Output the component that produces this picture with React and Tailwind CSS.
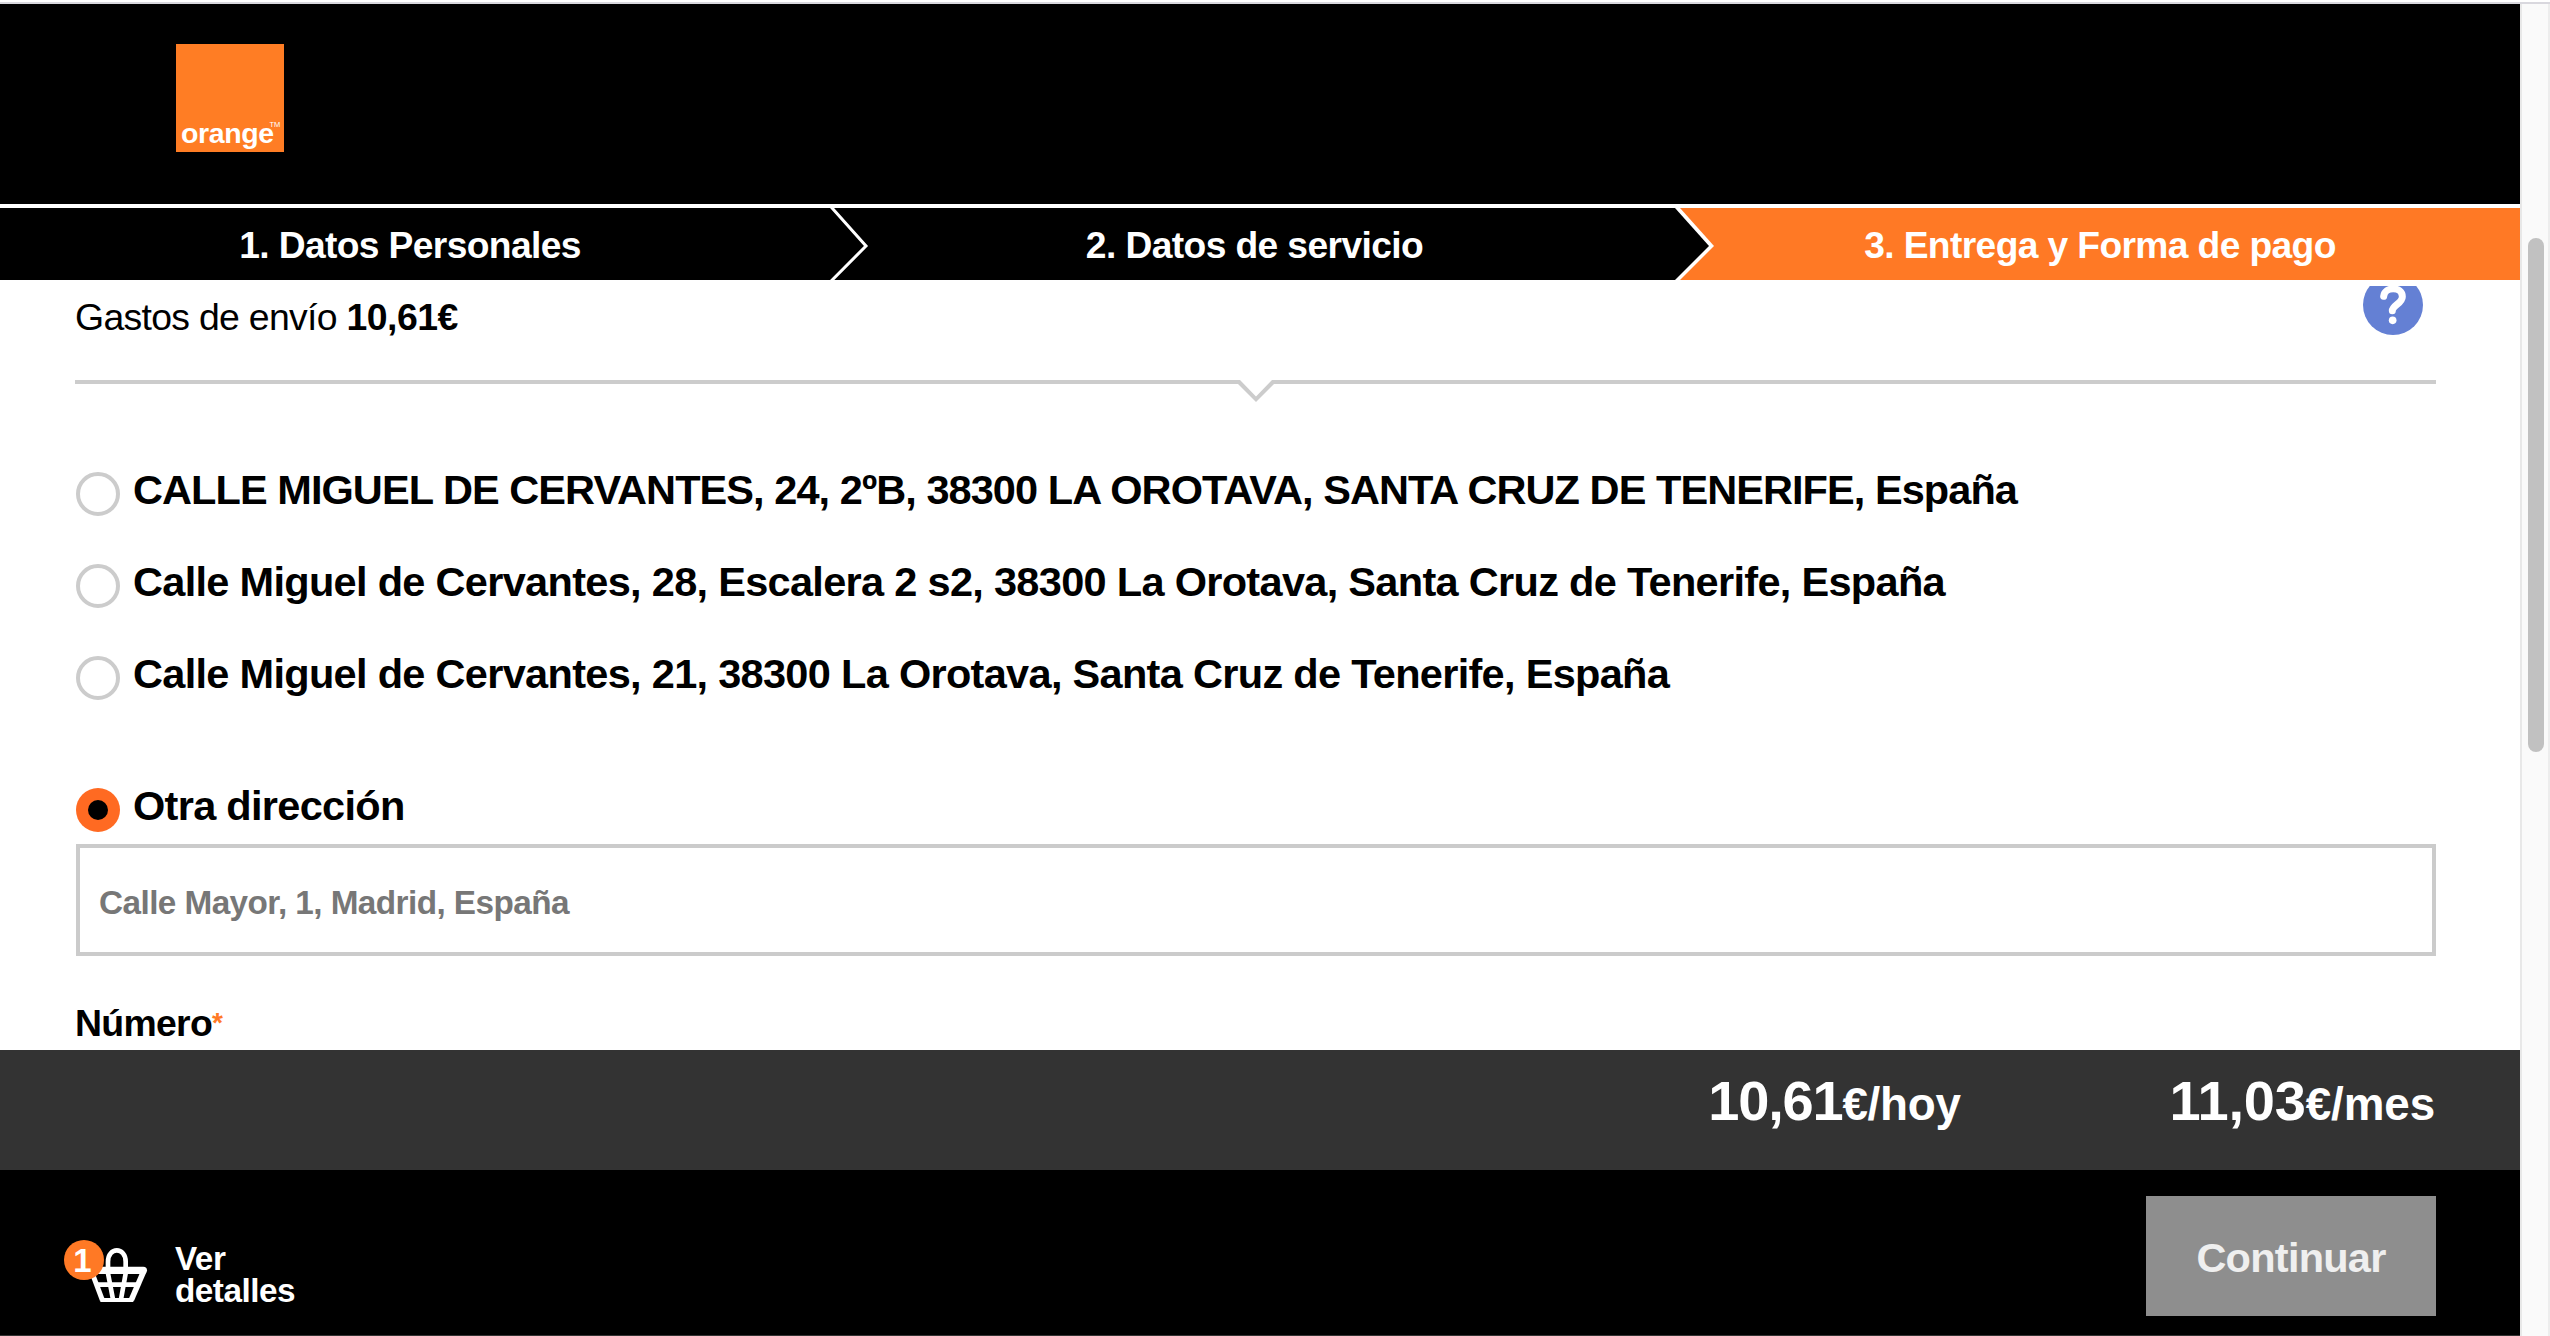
const addresses = [
  {
    text: "CALLE MIGUEL DE CERVANTES, 24, 2ºB, 38300 LA OROTAVA, SANTA CRUZ DE TENERIFE, España",
    tracking: "tracking-[-0.93px]",
  },
  {
    text: "Calle Miguel de Cervantes, 28, Escalera 2 s2, 38300 La Orotava, Santa Cruz de Tenerife, España",
    tracking: "tracking-[-0.69px]",
  },
  {
    text: "Calle Miguel de Cervantes, 21, 38300 La Orotava, Santa Cruz de Tenerife, España",
    tracking: "tracking-[-0.69px]",
  },
];

function Header() {
  return (
    <header className="flex h-[200px] shrink-0 bg-black pl-[176px] pt-10">
      <div className="relative flex size-[108px] items-end bg-[#ff7d24] pl-[5px] text-white">
        <span className="text-[28.5px] font-bold leading-[38px] tracking-[-0.4px]">orange</span>
        <span className="absolute left-[93.5px] top-[76px] text-[7.5px] leading-[9px]">TM</span>
      </div>
    </header>
  );
}

function Steps() {
  return (
    <nav className="mt-1 flex h-[72px] shrink-0 text-[37.2px] font-bold leading-[75px] text-white">
      <div className="relative flex w-[840px] justify-center bg-black pr-5 tracking-[-0.62px]">
        1. Datos Personales
        <svg className="absolute left-[820px] top-0 z-10" width="56" height="72" viewBox="0 0 56 72" fill="none">
          <path d="M11 -1.2 L46 38 L11 73.2" stroke="#fff" strokeWidth="3" />
        </svg>
      </div>
      <div className="flex w-[840px] justify-center bg-black pr-[11px] tracking-[-0.6px]">2. Datos de servicio</div>
      <div className="relative flex w-[840px] justify-center bg-[#ff7925] tracking-[-0.62px]">
        <svg className="absolute left-[-10px] top-0" width="50" height="72" viewBox="0 0 50 72">
          <path d="M0 0 H10 L44 38 L10 72 H0 Z" fill="#fff" />
          <path d="M0 0 H5 L39 38 L5 72 H0 Z" fill="#000" />
        </svg>
        3. Entrega y Forma de pago
      </div>
    </nav>
  );
}

function HelpIcon() {
  return (
    <svg className="mr-[13px] mt-[-11px] shrink-0" width="60" height="60" viewBox="99 15 180 180" fill="none">
      <circle cx="189" cy="105" r="90" fill="#6480d4" />
      <path
        d="M161 79 C164 49 217 49 217 80 C217 100 187 106 187 122"
        stroke="#fff"
        strokeWidth="21"
        strokeLinecap="round"
      />
      <circle cx="188" cy="151" r="11.5" fill="#fff" />
    </svg>
  );
}

function Divider() {
  return (
    <div className="flex h-[22px]">
      <div className="h-1 flex-1 bg-[#ccc]" />
      <svg width="40" height="22" viewBox="0 0 40 22">
        <path d="M0 0 H4 L20 16.5 L36 0 H40 V4 H38 L20 22 L2 4 H0 Z" fill="#ccc" />
      </svg>
      <div className="h-1 flex-1 bg-[#ccc]" />
    </div>
  );
}

function Radio({ checked }) {
  return checked ? (
    <span className="flex size-11 shrink-0 items-center justify-center rounded-full bg-[#ff6a22]">
      <span className="size-5 rounded-full bg-black" />
    </span>
  ) : (
    <span className="size-11 shrink-0 rounded-full border-4 border-[#ccc] bg-white" />
  );
}

function Content() {
  return (
    <main className="mt-[6px] h-[764px] shrink-0 overflow-hidden pl-[75px] pr-[84px] text-black">
      <div className="flex h-[94px] justify-between">
        <p className="whitespace-pre text-[37.4px] leading-[63px]">
          <span className="tracking-[-0.7px]">Gastos de envío </span>
          <b className="tracking-[-0.5px]">10,61€</b>
        </p>
        <HelpIcon />
      </div>
      <Divider />
      <div className="ml-px mt-[46px]">
        {addresses.map((a) => (
          <label key={a.text} className="flex h-[92px] items-center gap-[13px]">
            <Radio />
            <span className={`whitespace-nowrap pb-2 text-[41.5px] font-bold leading-[48px] ${a.tracking}`}>
              {a.text}
            </span>
          </label>
        ))}
        <label className="mt-16 flex h-11 items-center gap-[13px]">
          <Radio checked />
          <span className="pb-2 text-[41.5px] font-bold leading-[48px] tracking-[-0.7px]">Otra dirección</span>
        </label>
        <div className="mt-3 flex h-28 items-center border-4 border-[#cbcbcb] pl-[19px] pt-[5px] text-[33.3px] font-bold leading-10 tracking-[-0.56px] text-[#777]">
          Calle Mayor, 1, Madrid, España
        </div>
      </div>
      <div className="mt-[47px] flex h-10 text-[37.4px] font-bold leading-10 tracking-[-0.7px]">
        Número
        <span className="text-[28px] leading-[39px] text-[#ff7925]">*</span>
      </div>
    </main>
  );
}

function BasketIcon() {
  return (
    <div className="relative h-16 w-[84px]">
      <svg className="absolute left-6 top-[6px]" width="60" height="58" viewBox="96 48 180 174" fill="none" stroke="#fff">
        <path d="M112 121 H262" strokeWidth="22" strokeLinecap="round" />
        <path d="M108 128 L139 210" strokeWidth="15" />
        <path d="M263 124 L226 210" strokeWidth="17" />
        <path d="M133 210 H232" strokeWidth="12" />
        <path d="M118 164 H246" strokeWidth="14" />
        <path d="M171 208 L156 130 V95 C156 50 209 50 209 95 V130 L195 208" strokeWidth="14" />
      </svg>
      <span className="absolute left-0 top-0 flex size-10 justify-center rounded-full bg-[#ff7925] pr-[3px] text-[33px] font-bold leading-[42px] text-white">
        1
      </span>
    </div>
  );
}

function Footer() {
  return (
    <footer className="flex flex-1 flex-col bg-black font-bold text-white">
      <div className="flex h-[120px] shrink-0 justify-end gap-[209px] bg-[#333] pr-[85px] text-[56px] leading-[102px]">
        <p>
          <span className="tracking-[-1.2px]">10,61</span>
          <span className="text-[45.8px] leading-none tracking-[-0.3px]">€/hoy</span>
        </p>
        <p>
          <span className="tracking-[-0.2px]">11,03</span>
          <span className="text-[45.8px] leading-none tracking-[-0.1px]">€/mes</span>
        </p>
      </div>
      <div className="flex flex-1 items-start justify-between border-b border-[#333] pl-16 pr-[84px]">
        <div className="mt-[70px] flex gap-[27px]">
          <BasketIcon />
          <p className="pt-[3px] text-[33.3px] leading-8 tracking-[-0.5px]">
            Ver
            <br />
            detalles
          </p>
        </div>
        <button className="mt-[26px] h-[120px] w-[290px] bg-[#8e8e8e] pt-[4px] text-[41.5px] font-bold tracking-[-0.75px] text-[#efefef]">
          Continuar
        </button>
      </div>
    </footer>
  );
}

export default function App() {
  return (
    <div className="flex h-[1336px] w-[2550px] flex-col overflow-hidden bg-white font-['Liberation_Sans',Arial,sans-serif]">
      <div className="h-1 shrink-0 border-b-2 border-[#d9d8de]" />
      <div className="flex min-h-0 flex-1">
        <div className="flex w-[2520px] flex-col">
          <Header />
          <Steps />
          <Content />
          <Footer />
        </div>
        <div className="w-[30px] border-x-2 border-l-[#e8e8e8] border-r-[#ededed] bg-[#fafafa] pl-[6px] pt-[234px]">
          <div className="h-[514px] w-4 rounded-full bg-[#c1c1c1]" />
        </div>
      </div>
    </div>
  );
}
